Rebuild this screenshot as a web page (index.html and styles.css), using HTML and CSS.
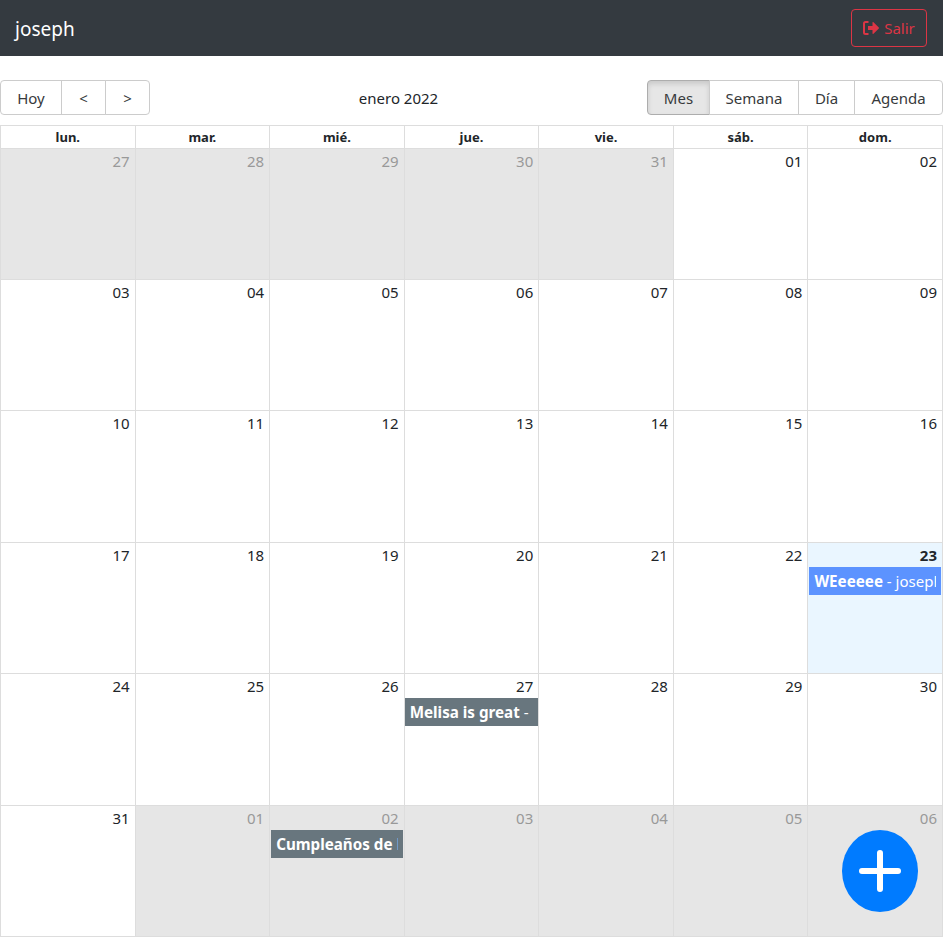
FILE: index.html
```html
<!DOCTYPE html>
<html lang="es">
<head>
<meta charset="UTF-8" />
<meta name="viewport" content="width=device-width, initial-scale=1" />
<title>Calendario</title>
<link rel="stylesheet" href="styles.css">
</head>
<body>
  <nav class="navbar">
    <span class="brand">joseph</span>
    <button class="btn-logout" type="button">
      <svg class="icon" viewBox="0 0 16 14" aria-hidden="true"><path fill="currentColor" d="M5.5 0h-3A2.5 2.5 0 0 0 0 2.5v9A2.5 2.5 0 0 0 2.5 14h3v-2h-3a.5.5 0 0 1-.5-.5v-9a.5.5 0 0 1 .5-.5h3zM5 5h4.5V1.6a.6.6 0 0 1 1-.4l5.3 5.4a.6.6 0 0 1 0 .8l-5.3 5.4a.6.6 0 0 1-1-.4V9H5z"/></svg>
      Salir
    </button>
  </nav>

  <div class="calendar">
    <div class="toolbar">
      <div class="btn-group">
        <button type="button" class="w-hoy">Hoy</button>
        <button type="button" class="w-nav">&lt;</button>
        <button type="button" class="w-nav">&gt;</button>
      </div>
      <span class="toolbar-label">enero 2022</span>
      <div class="btn-group">
        <button type="button" class="active w-mes">Mes</button>
        <button type="button" class="w-semana">Semana</button>
        <button type="button" class="w-dia">Día</button>
        <button type="button" class="w-agenda">Agenda</button>
      </div>
    </div>

    <div class="month">
      <div class="month-head">
        <div>lun.</div><div>mar.</div><div>mié.</div><div>jue.</div><div>vie.</div><div>sáb.</div><div>dom.</div>
      </div>

      <div class="week">
        <div class="day off"><span class="date">27</span></div>
        <div class="day off"><span class="date">28</span></div>
        <div class="day off"><span class="date">29</span></div>
        <div class="day off"><span class="date">30</span></div>
        <div class="day off"><span class="date">31</span></div>
        <div class="day"><span class="date">01</span></div>
        <div class="day"><span class="date">02</span></div>
      </div>
      <div class="week">
        <div class="day"><span class="date">03</span></div>
        <div class="day"><span class="date">04</span></div>
        <div class="day"><span class="date">05</span></div>
        <div class="day"><span class="date">06</span></div>
        <div class="day"><span class="date">07</span></div>
        <div class="day"><span class="date">08</span></div>
        <div class="day"><span class="date">09</span></div>
      </div>
      <div class="week">
        <div class="day"><span class="date">10</span></div>
        <div class="day"><span class="date">11</span></div>
        <div class="day"><span class="date">12</span></div>
        <div class="day"><span class="date">13</span></div>
        <div class="day"><span class="date">14</span></div>
        <div class="day"><span class="date">15</span></div>
        <div class="day"><span class="date">16</span></div>
      </div>
      <div class="week">
        <div class="day"><span class="date">17</span></div>
        <div class="day"><span class="date">18</span></div>
        <div class="day"><span class="date">19</span></div>
        <div class="day"><span class="date">20</span></div>
        <div class="day"><span class="date">21</span></div>
        <div class="day"><span class="date">22</span></div>
        <div class="day today">
          <span class="date">23</span>
          <div class="event event-blue"><b>WEeeeee</b> - joseph</div>
        </div>
      </div>
      <div class="week">
        <div class="day"><span class="date">24</span></div>
        <div class="day"><span class="date">25</span></div>
        <div class="day"><span class="date">26</span></div>
        <div class="day">
          <span class="date">27</span>
          <div class="event event-gray flush"><b>Melisa is great</b> - joseph</div>
        </div>
        <div class="day"><span class="date">28</span></div>
        <div class="day"><span class="date">29</span></div>
        <div class="day"><span class="date">30</span></div>
      </div>
      <div class="week">
        <div class="day"><span class="date">31</span></div>
        <div class="day off"><span class="date">01</span></div>
        <div class="day off">
          <span class="date">02</span>
          <div class="event event-gray"><b>Cumpleaños de Melisa</b> - joseph</div>
        </div>
        <div class="day off"><span class="date">03</span></div>
        <div class="day off"><span class="date">04</span></div>
        <div class="day off"><span class="date">05</span></div>
        <div class="day off"><span class="date">06</span></div>
      </div>
    </div>
  </div>

  <button class="fab" type="button" aria-label="Nuevo evento">
    <svg viewBox="0 0 42 42" aria-hidden="true"><path d="M21 3v36M3 21h36" stroke="#fff" stroke-width="6" stroke-linecap="round" fill="none"/></svg>
  </button>
</body>
</html>
```

FILE: styles.css
```css
/* Reset and base */
* {
  box-sizing: border-box;
}
html, body {
  margin: 0;
  padding: 0;
  height: 100%;
}
body {
  font-family: "Noto Sans", "Open Sans", sans-serif;
  font-size: 15px;
  color: #212529;
  background: #fff;
  display: flex;
  flex-direction: column;
}
button {
  font-family: inherit;
}

/* Navbar */
.navbar {
  background: #343a40;
  height: 56px;
  flex: none;
  display: flex;
  justify-content: space-between;
  align-items: center;
  padding: 0 16px 0 15px;
}
.brand {
  color: #fff;
  font-size: 19px;
  padding-top: 2px;
}
.btn-logout {
  height: 38px;
  width: 76px;
  padding: 0;
  display: flex;
  align-items: center;
  justify-content: center;
  gap: 5px;
  font-size: 15px;
  color: #dc3545;
  background: transparent;
  border: 1px solid #dc3545;
  border-radius: 4px;
}
.icon {
  width: 16px;
  height: 14px;
}

/* Toolbar */
.calendar {
  flex: 1;
  min-height: 0;
  display: flex;
  flex-direction: column;
  padding-top: 24px;
}
.toolbar {
  flex: none;
  display: flex;
  align-items: center;
  margin-bottom: 10px;
}
.toolbar-label {
  flex: 1;
  text-align: center;
}
.btn-group {
  display: flex;
}
.btn-group button {
  height: 35px;
  padding: 0;
  font-size: 15px;
  color: #373a3c;
  background: #fff;
  border: 1px solid #ccc;
  margin-left: -1px;
}
.btn-group button:first-child {
  margin-left: 0;
  border-radius: 4px 0 0 4px;
}
.btn-group button:last-child {
  border-radius: 0 4px 4px 0;
}
.btn-group button.active {
  background: #e6e6e6;
  border-color: #adadad;
  box-shadow: inset 0 3px 5px rgba(0,0,0,0.125);
}
.w-hoy { width: 62px; }
.w-nav { width: 45px; }
.w-mes { width: 63px; }
.w-semana { width: 90px; }
.w-dia { width: 57px; }
.w-agenda { width: 89px; }

/* Month grid: every cell draws its own left border, the grid draws the rest */
.month {
  flex: 1;
  min-height: 0;
  display: flex;
  flex-direction: column;
  border: 1px solid #ddd;
  border-left: none;
}
.month-head {
  flex: none;
  height: 21.7px;
  display: grid;
  grid-template-columns: repeat(7, 1fr);
  font-size: 13px;
  font-weight: 700;
  text-align: center;
  line-height: 22px;
}
.month-head div {
  border-left: 1px solid #ddd;
}
.week {
  flex: 1;
  min-height: 0;
  display: grid;
  grid-template-columns: repeat(7, minmax(0, 1fr));
  border-top: 1px solid #ddd;
}
.day {
  min-width: 0;
  overflow: hidden;
  border-left: 1px solid #ddd;
}
.date {
  display: block;
  height: 24px;
  line-height: 24px;
  padding-right: 5px;
  text-align: right;
}
.off {
  background: #e6e6e6;
}
.off .date {
  color: #999;
}
.today {
  background: #eaf6ff;
}
.today .date {
  font-weight: 700;
}

/* Events */
.event {
  height: 28px;
  line-height: 28px;
  margin: 0 1px;
  padding: 0 5px;
  color: #fff;
  white-space: nowrap;
  /* clip at the padding edge so the text stops short of the right side */
  overflow: clip;
  overflow-clip-margin: content-box;
}
.event b {
  font-size: 15.2px;
}
.event.flush {
  margin: 0;
  padding-right: 7px;
}
.event-blue {
  background: #5c93ff;
}
.event-gray {
  background: #68767e;
}

/* Floating add button */
.fab {
  position: fixed;
  right: 25px;
  bottom: 25px;
  width: 76px;
  height: 82px;
  padding: 0;
  border: none;
  border-radius: 50%;
  background: #007bff;
  display: flex;
  align-items: center;
  justify-content: center;
}
.fab svg {
  width: 42px;
  height: 42px;
}
```
